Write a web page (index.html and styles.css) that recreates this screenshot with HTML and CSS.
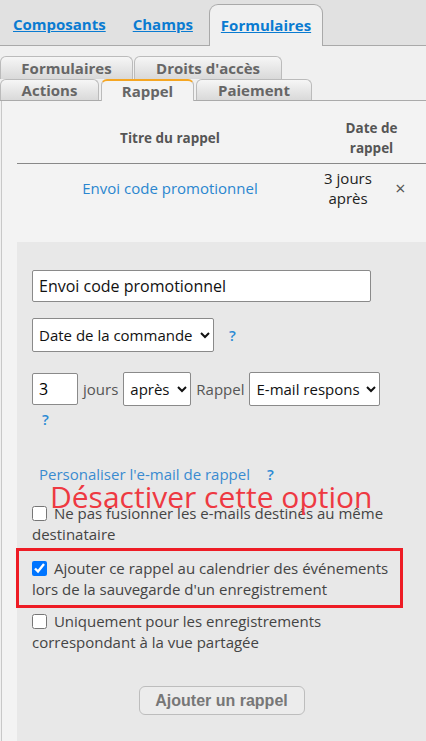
FILE: index.html
```html
<!DOCTYPE html>
<html lang="fr">
<head>
<meta charset="utf-8">
<link rel="stylesheet" href="styles.css">
</head>
<body>
<div class="topbar">
  <a class="toptab" href="#">Composants</a>
  <a class="toptab" href="#">Champs</a>
  <a class="toptab active" href="#">Formulaires</a>
</div>
<div class="main">
  <div class="subtabs row1">
    <span class="subtab">Formulaires</span>
    <span class="subtab">Droits d'accès</span>
  </div>
  <div class="subtabs row2">
    <span class="subtab">Actions</span>
    <span class="subtab current">Rappel</span>
    <span class="subtab">Paiement</span>
  </div>
  <div class="panel">
    <div class="table">
      <div class="th th-title">Titre du rappel</div>
      <div class="th th-date">Date de<br>rappel</div>
      <div class="td td-title"><a href="#">Envoi code promotionnel</a></div>
      <div class="td td-date">3 jours<br>après</div>
      <div class="td td-del">×</div>
    </div>
    <div class="form">
      <input class="txt" type="text" value="Envoi code promotionnel">
      <div class="line">
        <select class="sel sel-date"><option>Date de la commande</option></select>
        <span class="help">?</span>
      </div>
      <div class="line line3">
        <input class="num" type="text" value="3">
        <span class="lbl">jours</span>
        <select class="sel sel-when"><option>après</option></select>
        <span class="lbl">Rappel</span>
        <select class="sel sel-mail"><option>E-mail respons</option></select>
      </div>
      <div class="help help-wrap">?</div>
      <div class="custom"><a href="#">Personaliser l'e-mail de rappel</a><span class="help">?</span></div>
      <div class="note">Désactiver cette option</div>
      <label class="chk"><input type="checkbox"> Ne pas fusionner les e-mails destinés au même destinataire</label>
      <label class="chk boxed"><input type="checkbox" checked> Ajouter ce rappel au calendrier des événements lors de la sauvegarde d'un enregistrement</label>
      <label class="chk"><input type="checkbox"> Uniquement pour les enregistrements correspondant à la vue partagée</label>
      <div class="actions"><button class="btn" type="button">Ajouter un rappel</button></div>
    </div>
  </div>
</div>
</body>
</html>
```
FILE: styles.css
```css
html, body {
  margin: 0;
  padding: 0;
}
body {
  font-family: "Open Sans", "DejaVu Sans", sans-serif;
  background: #f0f0f0;
  overflow: hidden;
}
.topbar {
  display: flex;
  align-items: flex-end;
  gap: 5px;
  height: 45px;
  padding-left: 2px;
  background: #e1e1e1;
  border-bottom: 1px solid #a9a9a9;
}
.toptab {
  display: flex;
  align-items: center;
  height: 41px;
  padding: 0 11px 2px;
  box-sizing: border-box;
  font-weight: 700;
  font-size: 15px;
  color: #0a7bd1;
  text-decoration: underline;
}
.toptab.active {
  background: #f0f0f0;
  border: 1px solid #a9a9a9;
  border-bottom: none;
  border-radius: 9px 9px 0 0;
  margin-bottom: -1px;
  height: 42px;
}
.main {
  padding-top: 10px;
}
.subtabs {
  display: flex;
  gap: 1px;
  height: 23px;
}
.row2 {
  gap: 2px;
  height: 21px;
  border-bottom: 1px solid #aaa;
}
.subtab {
  display: flex;
  align-items: center;
  justify-content: center;
  padding: 0 20px;
  box-sizing: border-box;
  border: 1px solid #bbb;
  border-bottom: none;
  border-radius: 6px 6px 0 0;
  background: linear-gradient(#f6f6f6, #d9d9d9);
  font-weight: 700;
  font-size: 15px;
  color: #666;
}
.row1 .subtab:first-child { width: 133px; }
.row1 .subtab:nth-child(2) { width: 148px; }
.row2 .subtab:first-child { width: 99px; }
.row2 .subtab.current { width: 93px; }
.row2 .subtab:last-child { width: 116px; }
.subtab.current {
  background: #f3f3f3;
  border-top: 2px solid #f5a623;
  margin-bottom: -1px;
  height: 22px;
}
.panel {
  background: #f3f3f3;
  border-left: 1px solid #c8c8c8;
  margin-left: 1px;
  padding: 17px 0 0 15px;
}
.table {
  display: grid;
  grid-template-columns: 306px 50px 53px;
  margin-bottom: 28px;
}
.th {
  font-weight: 700;
  font-size: 13.5px;
  line-height: 20px;
  color: #555;
  text-align: center;
  border-bottom: 1px solid #888;
  padding-bottom: 5px;
}
.th-title {
  display: flex;
  align-items: center;
  justify-content: center;
}
.th-date {
  grid-column: 2 / 4;
  padding-right: 6px;
}
.td {
  font-size: 15px;
  line-height: 20px;
  color: #222;
  padding: 4px 0 6px;
  display: flex;
  align-items: center;
  justify-content: center;
  text-align: center;
}
.td-title a {
  color: #2a86cf;
  text-decoration: none;
}
.td-del {
  font-size: 18px;
  color: #555;
  padding-left: 2px;
}
.form {
  background: #e8e8e8;
  padding: 28px 0 26px 15px;
  position: relative;
}
.txt {
  display: block;
  width: 339px;
  height: 32px;
  box-sizing: border-box;
  border: 1px solid #8a8a8a;
  border-radius: 2px;
  padding: 0 6px;
  font-family: "Open Sans", sans-serif;
  font-size: 16px;
  color: #111;
  background: #fff;
  margin: 0;
}
.line {
  display: flex;
  align-items: center;
  margin-top: 16px;
}
.line3 {
  margin-top: 20px;
}
.sel {
  height: 34px;
  box-sizing: border-box;
  border: 1px solid #8a8a8a;
  border-radius: 2px;
  background: #fff;
  font-family: "Open Sans", sans-serif;
  font-size: 15px;
  color: #111;
  padding: 0 2px;
  margin: 0;
}
.sel-date { width: 182px; }
.sel-when { width: 68px; }
.sel-mail { width: 131px; }
.num {
  width: 46px;
  height: 32px;
  box-sizing: border-box;
  border: 1px solid #8a8a8a;
  border-radius: 2px;
  padding: 0 6px;
  font-family: "Open Sans", sans-serif;
  font-size: 16px;
  background: #fff;
  margin: 0;
}
.lbl {
  font-size: 15px;
  color: #555;
  margin: 0 5px;
}
.help {
  font-size: 15px;
  font-weight: 600;
  color: #2a8ad4;
  margin-left: 15px;
}
.help-wrap {
  margin-left: 10px;
  line-height: 20px;
  margin-top: 3px;
}
.custom {
  margin-top: 35px;
  padding-left: 7px;
  font-size: 15px;
  line-height: 20px;
}
.custom a {
  color: #3a8bd0;
  text-decoration: none;
}
.custom .help {
  margin-left: 17px;
}
.note {
  position: absolute;
  left: 33px;
  top: 241px;
  font-size: 30px;
  color: #ee3942;
  line-height: 28px;
  white-space: nowrap;
}
.chk {
  display: block;
  width: 360px;
  font-size: 15px;
  line-height: 21px;
  color: #444;
  margin-top: 19px;
}
.chk input {
  width: 15px;
  height: 15px;
  margin: 0 3px 0 0;
  vertical-align: -2px;
}
.chk.boxed {
  margin-top: 3px;
  margin-left: -16px;
  padding: 7px 0 5px 13px;
  width: 368px;
  border: 3px solid #ee1c25;
}
.chk.boxed + .chk {
  margin-top: 3px;
}
.actions {
  width: 409px;
  margin-left: -15px;
  display: flex;
  justify-content: center;
  margin-top: 33px;
}
.btn {
  width: 166px;
  height: 29px;
  border: 1px solid #bdbdbd;
  border-radius: 6px;
  background: #ececec;
  font-family: "Liberation Sans", Arial, sans-serif;
  font-weight: 700;
  font-size: 16px;
  color: #777;
  padding: 0;
}
```
